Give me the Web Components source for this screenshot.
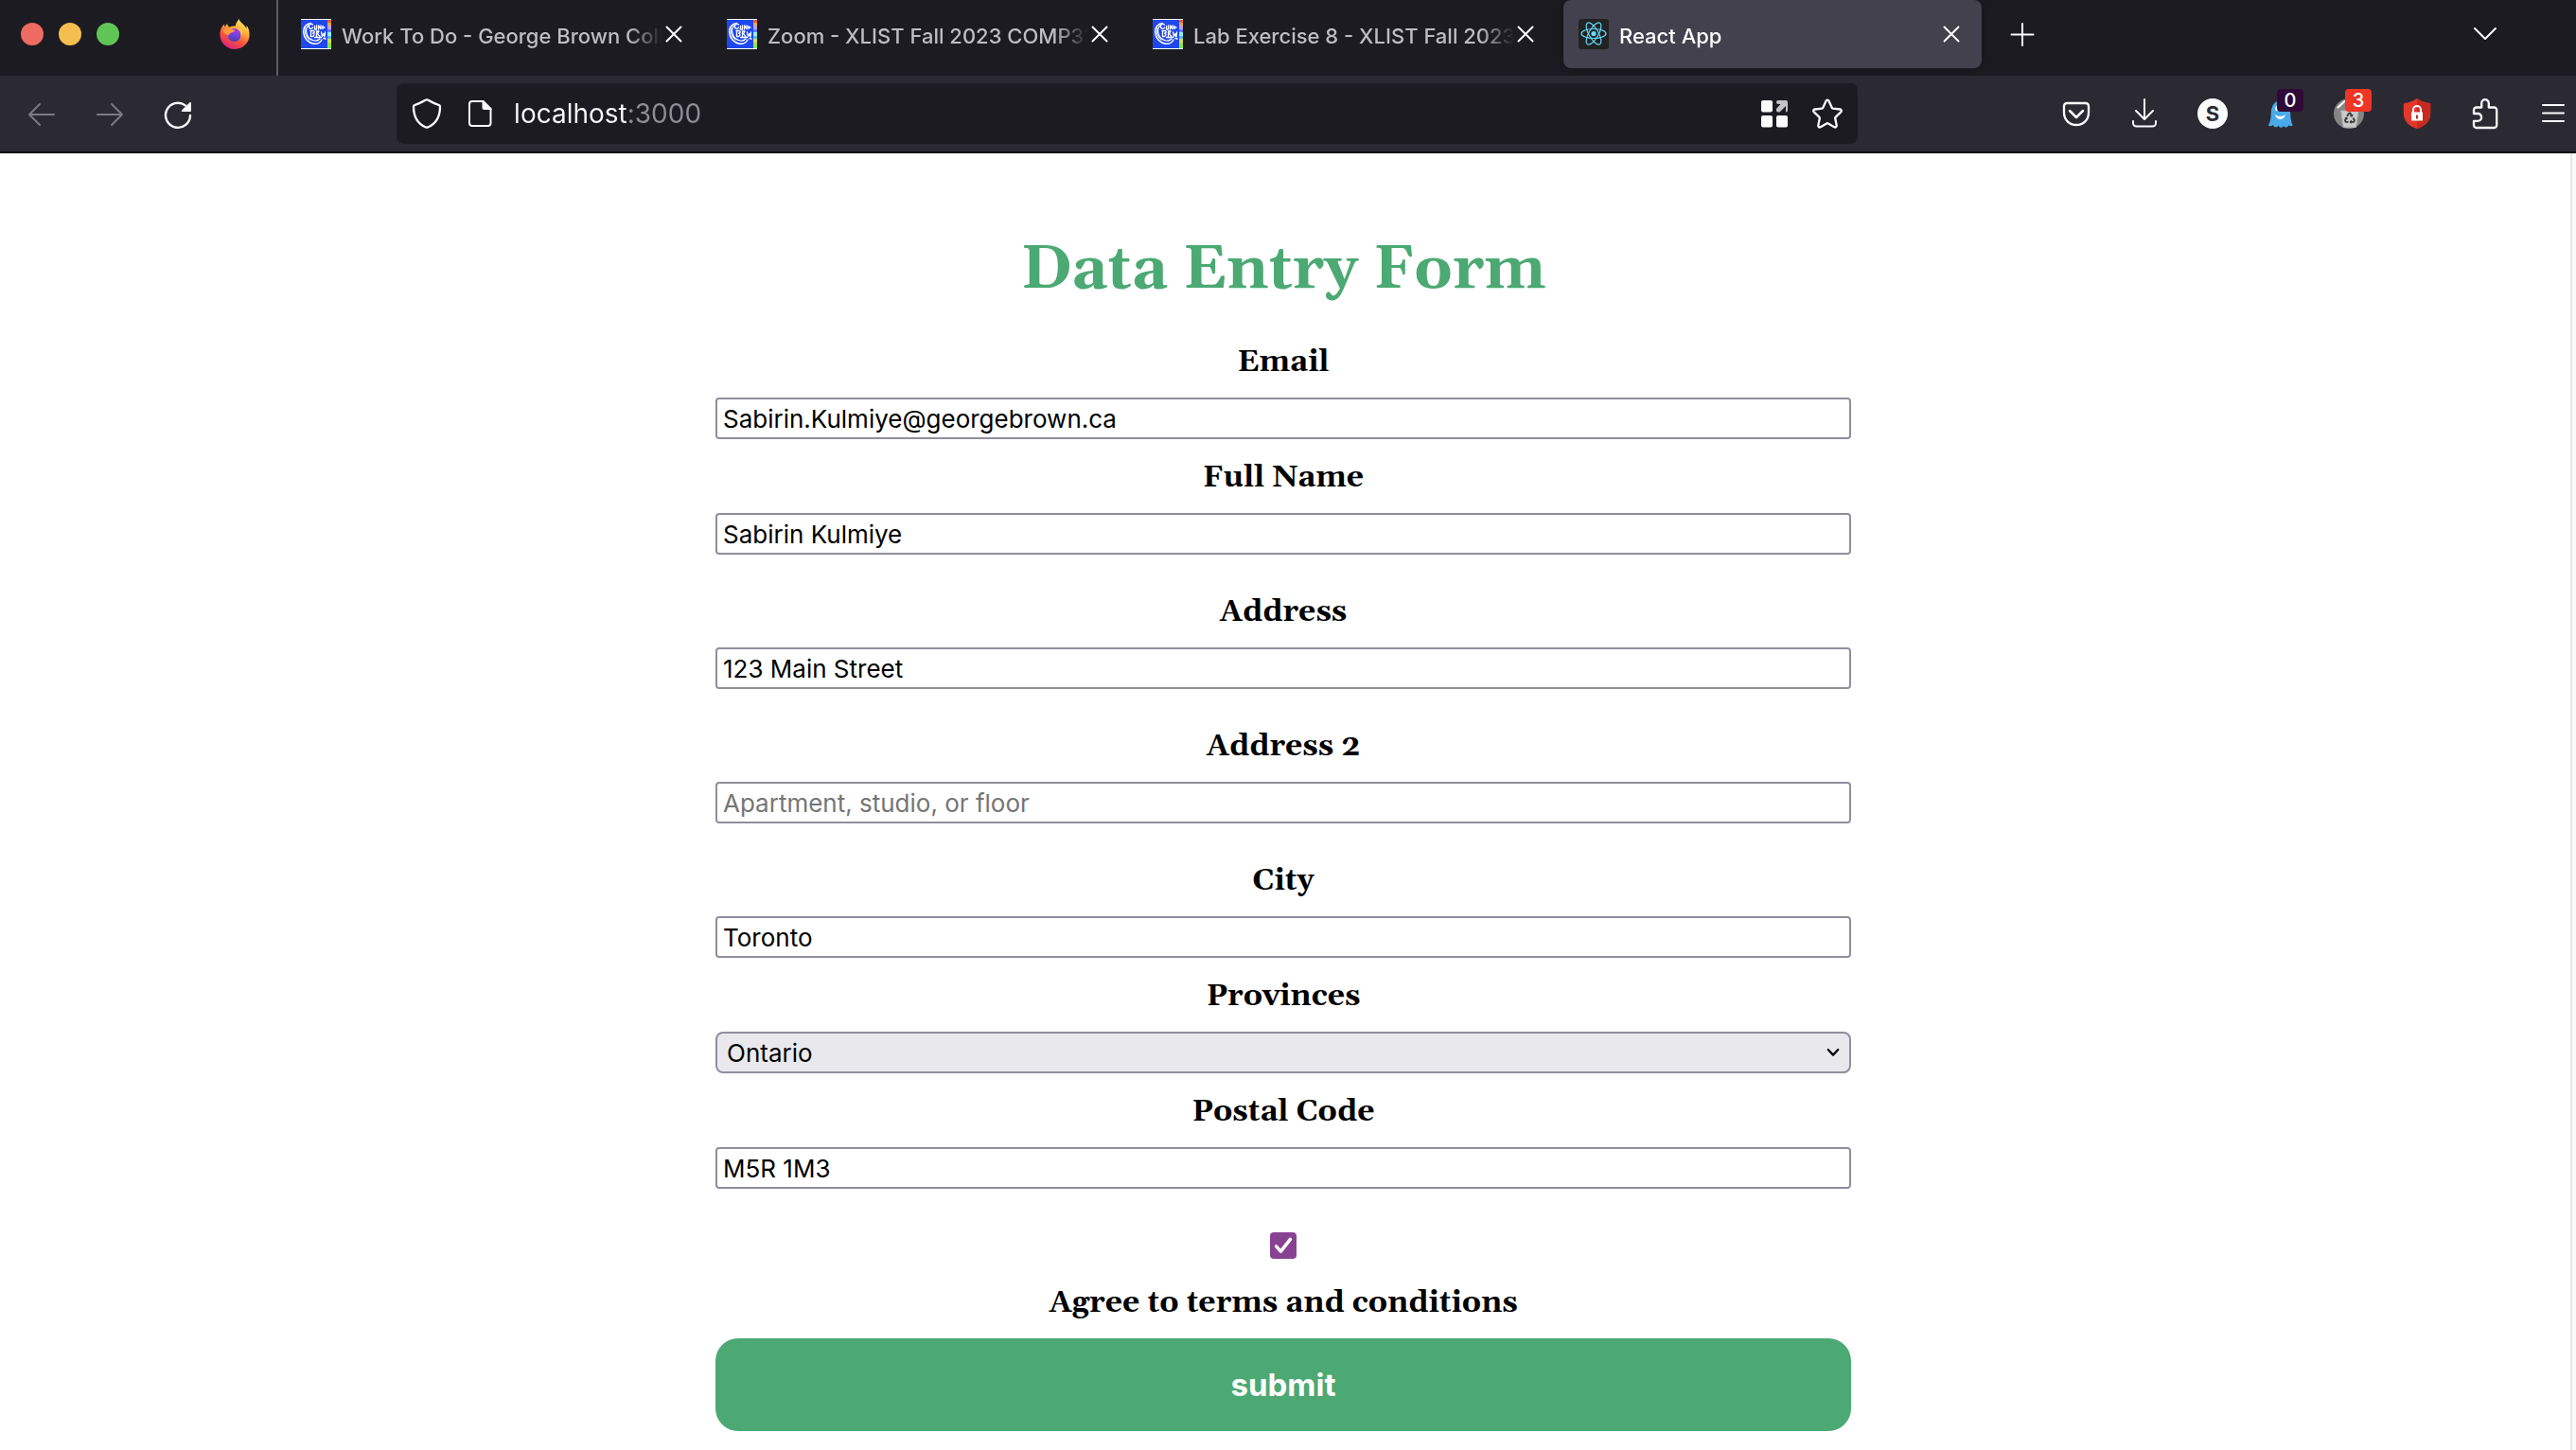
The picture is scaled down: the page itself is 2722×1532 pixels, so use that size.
<!DOCTYPE html>
<html lang="en">
<head>
<meta charset="utf-8">
<title>React App</title>
<style>
  html, body { margin: 0; min-height: 100%; background: #fff; }
  body {
    --ui: Inter, "Liberation Sans", sans-serif;
    --serif: Georgia, Gelasio, "DejaVu Serif", serif;
    --green: #4ca973;
    --strip: #1c1b22;
    --bar: #2b2a33;
    --ink: #fbfbfe;
    --edge: #8f8f9d;
    font-family: var(--ui);
  }
</style>
</head>
<body>
<browser-window>
  <tab-strip slot="tabs">
    <browser-tab icon="college" label="Work To Do - George Brown College"></browser-tab>
    <browser-tab icon="college" label="Zoom - XLIST Fall 2023 COMP3123"></browser-tab>
    <browser-tab icon="college" label="Lab Exercise 8 - XLIST Fall 2023 COMP"></browser-tab>
    <browser-tab icon="react" label="React App" selected></browser-tab>
  </tab-strip>
  <nav-bar slot="toolbar"></nav-bar>
  <entry-form></entry-form>
</browser-window>

<script>
const ICONS = {
  firefox: `<defs>
    <linearGradient id="fa" x1=".8" y1="0" x2=".3" y2="1"><stop offset="0" stop-color="#fff36b"/><stop offset=".35" stop-color="#ffb13b"/><stop offset=".65" stop-color="#f9553e"/><stop offset="1" stop-color="#d8217c"/></linearGradient>
    <linearGradient id="fb" x1=".6" y1="0" x2=".4" y2="1"><stop offset="0" stop-color="#b438dc"/><stop offset=".5" stop-color="#7542dd"/><stop offset="1" stop-color="#4b3cae"/></linearGradient></defs>
    <path fill="url(#fa)" d="M20.5 0c-.6 1.300-3.400 4-3.700 7.600-2-.4-4.200 0-6 1-1.700-.3-2.300-1.600-2.300-3.300-1.600.6-2.400 2-2.700 3.200-.6-.7-.8-1.900-.6-3C2.300 7.300.4 12.300.4 16.200.4 25 7.400 32 16 32s15.600-6.900 15.600-15.500c0-4-1.200-7.600-3.100-9.500.1 1.300.1 2-.2 2.700C26.300 5.500 22 4.400 20.500 0z"/>
    <circle cx="15.600" cy="17" r="7" fill="url(#fb)"/>
    <path fill="#ff9a3c" d="M3.500 12.500c2-2.500 5-3.300 8-2.800 1.200 1.500 3.200 1.700 4.800 2.100-.3 2-2.800 2.300-4 2.700-1.600.6-1.600 2-3.200 3-2-.9-4.200-2.600-5.600-5z"/>
    <path fill="#ffc94a" d="M18 10.500c3.500.5 5.500 4 4.500 8.500 1.500-1.500 2-4 1.500-6.500-1.200-2.200-3.500-2.800-6-2z"/>`,
  college: `<rect width="32" height="32" fill="#fff"/><rect y="1" width="28" height="30" fill="#1f48ee"/>
    <g shape-rendering="crispEdges"><path fill="#e8622c" d="M28 1h4v3h-4z"/><path fill="#f4a340" d="M28 4h4v3h-4z"/><path fill="#b9a0ee" d="M28 7h4v4h-4z"/><path fill="#6d7cf0" d="M28 11h4v3h-4z"/><path fill="#8ff3fb" d="M28 14h4v4h-4z"/><path fill="#5db8f2" d="M28 18h4v3h-4z"/><path fill="#d6e04c" d="M28 21h4v4h-4z"/><path fill="#a8d850" d="M28 25h4v3h-4z"/><path fill="#74f43c" d="M28 28h4v3h-4z"/></g>
    <g fill="none" stroke="#fff" stroke-linecap="round" stroke-linejoin="round"><path stroke-width="1.500" d="M10.500 4.500C5.500 4.800 2.300 9 2.700 14c.4 6.500 5 11.500 11 12.300 4.200.4 7-1.800 8.300-4.300"/><path stroke-width="1.200" d="M8.500 6.500C5.800 8.500 5 12 6 15.500c1.200 4.200 4.500 7 8.500 7.500 2.500.2 4.500-.8 5.500-2"/><path stroke-width="1" d="M4.200 9.500c-.6 5 1.300 10 5 13"/><path stroke-width="1.300" d="M12.500 6c-2-1.500-4.500 0-4 2.500s3 2.500 4 .5M14.500 7.500v3.500h2V7M18.500 11V7l2.500 3.500V7M23 7.500v3M22.500 9h2.500M10 12.500h3.500c1.500 1 .5 2.500-1 2.700 2 .3 2 3-.5 3.300h-1.500v-6M16.500 19v-6h2.500l-1.500 2.700 2.500 3M21.500 14l1 4.500 1.500-3 1 3.500.5-5M14.500 19.500h7M24 20.500l2 .5"/></g>`,
  react: `<rect width="32" height="32" rx="3" fill="#222" stroke="none"/><g fill="none" stroke="#61dafb" stroke-width="1.200"><ellipse cx="16" cy="15.500" rx="13" ry="5"/><ellipse cx="16" cy="15.500" rx="13" ry="5" transform="rotate(60 16 15.500)"/><ellipse cx="16" cy="15.500" rx="13" ry="5" transform="rotate(120 16 15.500)"/></g><circle cx="16" cy="15.500" r="2.600" fill="#61dafb" stroke="none"/>`,
  close: `<path d="m8.500 8.500 15 15m0-15-15 15"/>`,
  plus: `<path d="M16 5v23M4.500 16.500h23"/>`,
  chevron: `<path d="m5 10 11 11 11-11"/>`,
  back: `<path d="M29 17H3.500M14 6 3 17l11 11"/>`,
  forward: `<path d="M3 17h25.500M18 6l11 11-11 11"/>`,
  reload: `<path stroke-width="2.400" d="M29 18a13 13 0 1 1-5.200-10.600"/><path fill="currentColor" stroke="none" d="M30 5v8a1 1 0 0 1-1 1h-8.400c-.8 0-1.100-.9-.6-1.400l8.500-8.300c.6-.6 1.500-.2 1.500.7z"/>`,
  shield: `<path stroke-width="2.300" d="M16 1.300c.5 0 1 .2 1.500.5C20.500 3.500 25 6 28.500 6.800c1 .2 1.500.8 1.500 1.700 0 9-3 17.500-12.500 21.800-1 .5-2 .5-3 0C5 26 2 17.500 2 8.500c0-.9.500-1.500 1.500-1.700C7 6 11.500 3.500 14.500 1.800c.5-.3 1-.5 1.500-.5z"/>`,
  page: `<path d="M8 3h11l8.500 8.500V26a3 3 0 0 1-3 3H8a3 3 0 0 1-3-3V6a3 3 0 0 1 3-3z"/><path fill="currentColor" stroke="none" d="M18.500 2H20l8.500 8.500V12h-8a2 2 0 0 1-2-2z"/>`,
  apps: `<g fill="currentColor" stroke="none"><rect x="2" y="2" width="12" height="12.500" rx="2"/><rect x="2" y="18" width="12" height="12.500" rx="2"/><rect x="18" y="18" width="12" height="12.500" rx="2"/><path opacity=".75" d="M20 2h8a2 2 0 0 1 2 2v8.500a2 2 0 0 1-2 2V8l-6.500 6.500h-1.500a2 2 0 0 1-2-2V11l4.500-5H20a2 2 0 0 1 0-4z"/></g>`,
  star: `<path stroke-width="2.300" d="M14.600 2.500c.5-1.300 2.300-1.300 2.800 0l3.300 7.200c.2.500.7.800 1.200.9l7.400.9c1.500.2 2 1.800.9 2.800l-5.500 5.300c-.4.400-.6.900-.5 1.500l1.500 7.500c.3 1.400-1.200 2.300-2.400 1.600l-6.500-3.800c-.5-.3-1.100-.3-1.600 0l-6.500 3.800c-1.200.7-2.700-.2-2.400-1.600l1.500-7.500c.1-.6-.1-1.100-.5-1.500l-5.500-5.300c-1.100-1-.6-2.600.9-2.800l7.400-.9c.5-.1 1-.4 1.200-.9z"/>`,
  pocket: `<path stroke-width="2.300" d="M6 5h20a3 3 0 0 1 3 3v7c0 7.500-5.500 13-13 13S3 22.500 3 15V8a3 3 0 0 1 3-3z"/><path stroke-width="2.500" d="m9 13 7 7 7-7"/>`,
  download: `<path d="M16 1v20.500M7 13l9 9 9-9M4 24v2a3.500 3.500 0 0 0 3.500 3.500h17A3.500 3.500 0 0 0 28 26v-2"/>`,
  ghost: `<path fill="#4aa9ea" stroke="none" d="M16 2.500C8.500 2.500 6 9 5.800 15.500c-.1 5-.7 9.500-3 13 1.700 1.200 3.400 1 5-.5 1.300 3 4 3 5.800.8 1.300 2.600 4 2.600 5.400.2 1.500 2.200 4.200 2 5.500-.8 1.400 1.300 2.600 1.400 4.300.300-2-3.500-2.500-8-2.600-13C26 9 23.500 2.500 16 2.500z"/><path fill="#fff" stroke="none" d="M10 17c3 2.500 8 2.500 11 0-.8 3.500-3 5-5.500 5S10.800 20.500 10 17z"/><ellipse cx="12" cy="10.500" rx="1.800" ry="2.800" fill="#fff" stroke="none"/><ellipse cx="19" cy="10.500" rx="1.800" ry="2.800" fill="#fff" stroke="none"/>`,
  bin: `<circle cx="16" cy="16" r="16" fill="#858585" stroke="none"/><path stroke="#fff" stroke-width="2" d="m4.500 9.500 7-6.500"/><path fill="#c9c9c9" stroke="#b5b5b5" stroke-width="1" d="M8 13h18l-2.500 17.500h-13z"/><g stroke="#3a3a3a" stroke-width="1.800" stroke-linecap="butt"><path d="m14 19 2.200-3.500h1.200l1.800 3M20.500 20.500l1.500 2.700-.8 1.600h-3.300M15.500 24.800h-2.800l-.8-1.600 1.400-2.400"/><path stroke-width="1.300" d="m19.800 16.800-.4 2-2-.3M18.800 23.300l-1.400 1.500 1.400 1.500M11.800 21.300l1.700-.9.9 1.700"/></g>`,
  ublock: `<path fill="#e5362a" stroke="none" d="M16 0c4 3 8.500 4.700 14.200 5.200V16c0 8-6 13.500-14.200 16C7.800 29.500 1.800 24 1.800 16V5.200C7.500 4.700 12 3 16 0z"/><path fill="#c92a20" stroke="none" d="M16 0c4 3 8.500 4.700 14.200 5.200V16c0 8-6 13.500-14.200 16z"/><rect x="10" y="14.500" width="12" height="9" fill="#fff" stroke="none"/><path stroke="#fff" stroke-width="2" d="M12 15v-3a4 4 0 0 1 8 0v3"/><path stroke="#c92a20" stroke-width="2" stroke-linecap="butt" d="M16 17.500v4"/>`,
  puzzle: `<path stroke-width="2.300" d="M6.700 31h18.800a2.700 2.700 0 0 0 2.700-2.700V12.200a2.700 2.700 0 0 0-2.700-2.700h-5.700V5a3.800 3.800 0 0 0-7.600 0v4.500H6.700A2.700 2.700 0 0 0 4 12.200V16h4.200a3.900 3.900 0 0 1 0 7.800H4v4.500A2.700 2.700 0 0 0 6.700 31z"/>`,
  menu: `<path d="M5 7h22M5 15.500h22M5 24h22"/>`,
  select: `<path stroke-width="3" d="m9 12 7 7.500 7-7.500"/>`,
  check: `<path stroke-width="4" d="m7.500 17 5.500 6 11.500-14.500"/>`
};

function define(name, html, setup) {
  const template = document.createElement('template');
  template.innerHTML = html;
  customElements.define(name, class extends HTMLElement {
    connectedCallback() {
      if (this.shadowRoot) return;
      const root = this.attachShadow({ mode: 'open' });
      root.append(template.content.cloneNode(true));
      if (setup) setup(this, root);
    }
  });
}

const reset = `button{all:unset;box-sizing:border-box;display:flex;align-items:center;justify-content:center;cursor:pointer}`;

define('ui-icon', `<style>
  :host{display:block;flex:none;width:32px;height:32px}
  svg{display:block;width:100%;height:100%;fill:none;stroke:currentColor;stroke-width:2;stroke-linecap:round;stroke-linejoin:round;overflow:visible}
  :host([name=firefox]) svg,:host([name=college]) svg{stroke:none}
</style><svg viewBox="0 0 32 32" aria-hidden="true"></svg>`, (el, root) => {
  root.querySelector('svg').innerHTML = ICONS[el.getAttribute('name')];
});

define('browser-window', `<style>
  :host{display:flex;flex-direction:column;min-height:100vh;overflow:hidden}
  header{color:var(--ink);border-bottom:2px solid #0c0c0d}
  main{flex:1;display:flex}
  .page{flex:1;padding-right:4px}
  .track{width:4px;background:#fafafa;border-left:2px solid #e6e6e6}
</style>
<header><slot name="tabs"></slot><slot name="toolbar"></slot></header>
<main><div class="page"><slot></slot></div><div class="track"></div></main>`);

define('tab-strip', `<style>
  ${reset}
  :host{display:flex;height:80px;background:var(--strip)}
  .lights{display:flex;gap:16px;padding:24px 0 0 22px;width:232px;box-sizing:border-box}
  .lights button{width:24px;height:24px;border-radius:50%}
  .brand{width:62px;padding-top:20px;box-sizing:border-box;border-right:2px solid #5b5b60}
  .tabs{display:flex;gap:8px;padding-left:8px}
  .tool{height:72px;width:48px}
  .add{margin-left:19px}
  .list{margin:0 72px 0 auto}
</style>
<div class="lights"><button aria-label="Close window" style="background:#ed6b60"></button><button aria-label="Minimise" style="background:#f5bf4f"></button><button aria-label="Full screen" style="background:#61c555"></button></div>
<div class="brand"><ui-icon name="firefox"></ui-icon></div>
<div class="tabs" role="tablist"><slot></slot></div>
<button class="tool add" aria-label="New tab"><ui-icon name="plus"></ui-icon></button>
<button class="tool list" aria-label="List all tabs"><ui-icon name="chevron"></ui-icon></button>`);

define('browser-tab', `<style>
  ${reset}
  :host{display:flex;align-items:center;box-sizing:border-box;width:442px;height:72px;padding:0 20px 0 16px;border-radius:8px;color:#bdbdc1;font:500 22px/32px var(--ui)}
  :host([selected]){background:#42414d;color:var(--ink);box-shadow:0 0 8px rgba(0,0,0,.4)}
  .title{flex:1;min-width:0;margin:4px 0 0 11px;overflow:hidden;white-space:nowrap;-webkit-mask-image:linear-gradient(to left,transparent,#000 36px);mask-image:linear-gradient(to left,transparent,#000 36px)}
  button{width:24px;height:24px;color:var(--ink)}
</style>
<span class="title"></span><button aria-label="Close tab"><ui-icon name="close"></ui-icon></button>`, (el, root) => {
  el.setAttribute('role', 'tab');
  const icon = document.createElement('ui-icon');
  icon.setAttribute('name', el.getAttribute('icon'));
  const title = root.querySelector('.title');
  title.before(icon);
  title.textContent = el.getAttribute('label');
});

define('tool-button', `<style>
  ${reset}
  :host{display:block;position:relative;color:var(--ink)}
  button{width:48px;height:64px}
  button:disabled{color:#7c7b82}
  .badge{position:absolute;left:20px;top:6px;width:28px;height:24px;border-radius:4px;font:500 20px/24px var(--ui);text-align:center;color:#fff}
  .letter{width:32px;height:32px;border-radius:50%;background:var(--ink);color:var(--bar);font:700 22px/32px var(--ui);text-align:center}
</style><button></button>`, (el, root) => {
  const b = root.querySelector('button');
  b.setAttribute('aria-label', el.getAttribute('label'));
  b.disabled = el.hasAttribute('disabled');
  if (el.hasAttribute('letter')) b.innerHTML = `<span class="letter">${el.getAttribute('letter')}</span>`;
  else b.innerHTML = `<ui-icon name="${el.getAttribute('icon')}"></ui-icon>`;
  if (el.hasAttribute('badge')) b.insertAdjacentHTML('beforeend', `<span class="badge" style="background:${el.getAttribute('tone')}">${el.getAttribute('badge')}</span>`);
});

define('nav-bar', `<style>
  :host{display:flex;align-items:center;height:80px;background:var(--bar)}
  .group{display:flex;gap:24px}
  .start{padding-left:20px}
  .spring{flex:10 1 0}
  .url{flex:73 1 0;min-width:0;box-sizing:border-box;height:64px;display:flex;align-items:center;padding:0 16px;border-radius:8px;background:var(--strip)}
  .marks{display:flex;gap:24px}
  input{all:unset;flex:1;min-width:0;margin:0 20px;font:400 28px/40px var(--ui);color:#8e8d94;--host-width:120px;
    background:linear-gradient(to right,#fbfbfe var(--host-width),#8e8d94 var(--host-width));-webkit-background-clip:text;background-clip:text;-webkit-text-fill-color:transparent}
</style>
<div class="group start">
  <tool-button icon="back" label="Back" disabled></tool-button>
  <tool-button icon="forward" label="Forward" disabled></tool-button>
  <tool-button icon="reload" label="Reload"></tool-button>
</div>
<div class="spring"></div>
<div class="url"><div class="marks"><ui-icon name="shield"></ui-icon><ui-icon name="page"></ui-icon></div><input type="text" aria-label="Address bar" value="localhost:3000"><div class="marks"><ui-icon name="apps"></ui-icon><ui-icon name="star"></ui-icon></div></div>
<div class="spring"></div>
<div class="group">
  <tool-button icon="pocket" label="Pocket"></tool-button>
  <tool-button icon="download" label="Downloads"></tool-button>
  <tool-button letter="S" label="Account"></tool-button>
  <tool-button icon="ghost" label="Ghostery" badge="0" tone="#300a37"></tool-button>
  <tool-button icon="bin" label="Cookie cleaner" badge="3" tone="#ee3526"></tool-button>
  <tool-button icon="ublock" label="Blocker"></tool-button>
  <tool-button icon="puzzle" label="Extensions"></tool-button>
  <tool-button icon="menu" label="Menu"></tool-button>
</div>`);

define('form-field', `<style>
  :host{display:flex;flex-direction:column;gap:19px;text-align:center;margin-top:23px}
  :host([spaced]){margin-top:43px}
  label{font:700 32px/36px var(--serif);color:#000}
  .box{display:grid}
  input,select{appearance:none;grid-area:1/1;width:100%;height:44px;box-sizing:border-box;margin:0;padding:0 6px;border:2px solid var(--edge);border-radius:4px;background:#fff;color:#000;font:400 26px/40px var(--ui)}
  input::placeholder{color:#757575;opacity:1}
  select{padding:1px 10px 0;border-radius:8px;background:#e9e9ed}
  .arrow{grid-area:1/1;justify-self:end;align-self:center;width:24px;height:24px;margin-right:7px;pointer-events:none}
</style><label for="control"></label><div class="box"></div>`, (el, root) => {
  root.querySelector('label').textContent = el.getAttribute('label');
  const box = root.querySelector('.box');
  if (el.hasAttribute('options')) {
    box.innerHTML = `<select id="control">${el.getAttribute('options').split(',').map(o => `<option>${o}</option>`).join('')}</select><ui-icon class="arrow" name="select"></ui-icon>`;
  } else {
    const input = document.createElement('input');
    input.id = 'control';
    input.type = 'text';
    input.value = el.getAttribute('value') || '';
    input.placeholder = el.getAttribute('placeholder') || '';
    box.append(input);
  }
});

define('check-field', `<style>
  :host{display:flex;flex-direction:column;align-items:center;gap:29px;margin-top:46px}
  .box{display:grid;width:28px;height:28px}
  input{appearance:none;grid-area:1/1;width:28px;height:28px;margin:0;border-radius:4px;background:#884292}
  ui-icon{grid-area:1/1;width:28px;height:28px;color:#fff;pointer-events:none;z-index:1}
  label{font:700 32px/36px var(--serif);color:#000}
</style><div class="box"><input type="checkbox" id="agree" checked><ui-icon name="check"></ui-icon></div><label for="agree"><slot></slot></label>`);

define('entry-form', `<style>
  :host{display:block}
  form{display:flex;flex-direction:column;width:100%;max-width:1200px;margin:0 auto}
  h1{margin:88px 0 0;text-align:center;font:700 64px/72px var(--serif);color:var(--green)}
  form>:nth-child(2){margin-top:43px}
  button{margin:19px 0;height:98px;border:0;border-radius:24px;background:var(--green);color:#fff;font:700 33px/40px var(--ui)}
</style>
<form onsubmit="return false">
  <h1>Data Entry Form</h1>
  <form-field label="Email" value="Sabirin.Kulmiye@georgebrown.ca"></form-field>
  <form-field label="Full Name" value="Sabirin Kulmiye"></form-field>
  <form-field label="Address" value="123 Main Street" spaced></form-field>
  <form-field label="Address 2" placeholder="Apartment, studio, or floor" spaced></form-field>
  <form-field label="City" value="Toronto" spaced></form-field>
  <form-field label="Provinces" options="Ontario,Quebec,British Columbia"></form-field>
  <form-field label="Postal Code" value="M5R 1M3"></form-field>
  <check-field>Agree to terms and conditions</check-field>
  <button type="submit">submit</button>
</form>`);
</script>
</body>
</html>
